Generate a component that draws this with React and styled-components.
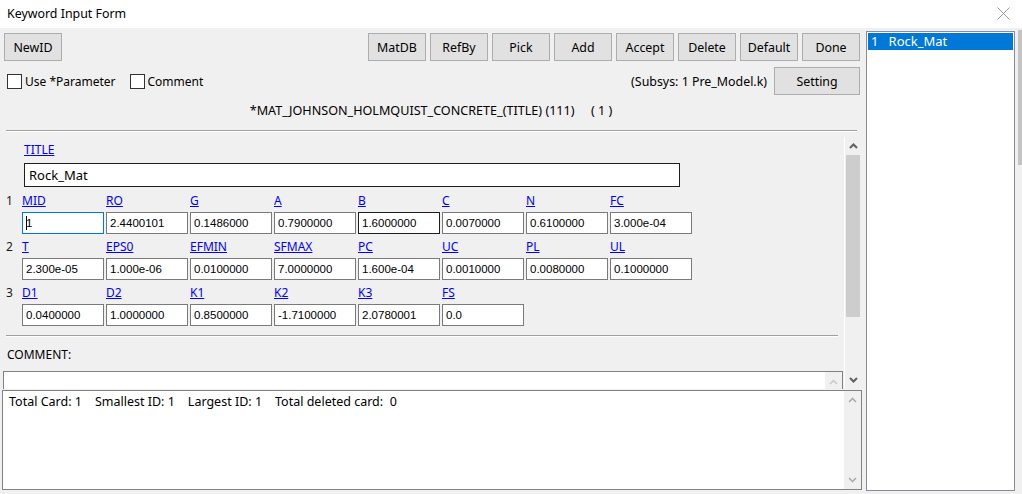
import React from 'react';
import styled, { createGlobalStyle } from 'styled-components';

const GlobalStyle = createGlobalStyle`
  html, body {
    margin: 0;
    padding: 0;
    background: #f0f0f0;
  }
  * {
    box-sizing: border-box;
  }
`;

const Window = styled.div`
  width: 1022px;
  height: 494px;
  display: flex;
  flex-direction: column;
  background: #f0f0f0;
  font-family: 'Noto Sans', 'Liberation Sans', sans-serif;
  font-size: 12px;
  color: #000;
  overflow: hidden;
`;

const TitleBar = styled.div`
  height: 28px;
  flex: none;
  background: #fff;
  display: flex;
  align-items: center;
  justify-content: space-between;
  padding: 0 12px 2px 7px;
  font-size: 12.4px;
`;

const Body = styled.div`
  flex: 1;
  display: flex;
  min-height: 0;
`;

const Main = styled.div`
  width: 864px;
  flex: none;
  display: flex;
  flex-direction: column;
  padding-right: 4px;
`;

const Toolbar = styled.div`
  display: flex;
  align-items: center;
  justify-content: space-between;
  margin-top: 5px;
  padding-left: 4px;
`;

const ButtonGroup = styled.div`
  display: flex;
  gap: 4px;
`;

const Button = styled.button`
  width: ${p => p.$w || 58}px;
  height: 28px;
  background: #e1e1e1;
  border: 1px solid #adadad;
  border-radius: 0;
  font-family: 'Noto Sans', 'Liberation Sans', sans-serif;
  font-size: 12.4px;
  color: #000;
  padding: 0;
  margin: 0;
`;

const OptionRow = styled.div`
  display: flex;
  align-items: center;
  justify-content: space-between;
  margin-top: 6px;
  padding-left: 7px;
  height: 28px;
`;

const CheckGroup = styled.div`
  display: flex;
  align-items: center;
  gap: 14px;
`;

const Check = styled.label`
  display: flex;
  align-items: center;
  gap: 3px;
  &::before {
    content: '';
    width: 13px;
    height: 13px;
    border: 1px solid #333;
    background: #fff;
  }
`;

const Subsys = styled.div`
  display: flex;
  align-items: center;
  gap: 7px;
  font-size: 12.4px;
`;

const Header = styled.div`
  margin-top: 6px;
  height: 20px;
  line-height: 20px;
  text-align: center;
  white-space: pre;
  padding-left: 2px;
  font-size: 12.6px;
`;

const Separator = styled.div`
  margin: ${p => p.$mt || 0}px ${p => p.$mr || 0}px 0 6px;
  height: 2px;
  border-top: 1px solid #a0a0a0;
  border-bottom: 1px solid #fff;
`;

const ScrollArea = styled.div`
  margin-top: 5px;
  height: 252px;
  display: flex;
  overflow: hidden;
`;

const Content = styled.div`
  width: 845px;
  flex: none;
  display: flex;
  flex-direction: column;
  border-right: 1px solid #fff;
`;

const Link = styled.span`
  color: #0000ff;
  text-decoration: underline;
  line-height: 16px;
  height: 16px;
  display: block;
`;

const TitleBlock = styled.div`
  padding: 5px 0 0 24px;
  display: flex;
  flex-direction: column;
  gap: 5px;
`;

const TitleInput = styled.div`
  width: 656px;
  height: 24px;
  border: 1px solid #1e1e1e;
  background: #fff;
  font-size: 13px;
  line-height: 22px;
  padding-left: 4px;
`;

const Card = styled.div`
  display: grid;
  grid-template-columns: 20px repeat(8, 82px);
  grid-template-rows: 16px 22px;
  column-gap: 2px;
  row-gap: 3px;
  margin-top: ${p => p.$mt}px;
`;

const RowNum = styled.span`
  padding-left: 6px;
  line-height: 16px;
  color: #1a1a1a;
`;

const Field = styled.div`
  height: 22px;
  border: 1px solid ${p => (p.$state === 'focus' ? '#0078d7' : p.$state === 'hover' ? '#1e1e1e' : '#7a7a7a')};
  background: #fff;
  font-family: 'Liberation Sans', Arial, sans-serif;
  font-size: 11.5px;
  line-height: 20px;
  padding-left: 3px;
  white-space: pre;
`;

const Caret = styled.span`
  display: inline-block;
  width: 1px;
  height: 14px;
  background: #000;
  vertical-align: -3px;
  margin-right: -1px;
`;

const CommentLabel = styled.div`
  margin: 10px 0 0 7px;
  line-height: 16px;
`;

const CommentInput = styled.div`
  margin: 8px 0 0 3px;
  width: 840px;
  height: 24px;
  flex: none;
  background: #fff;
  border-top: 1px solid #828282;
  border-left: 1px solid #828282;
  border-right: 1px solid #828282;
  display: flex;
  justify-content: flex-end;
`;

const MiniBar = styled.div`
  width: 17px;
  background: #f0f0f0;
  display: flex;
  flex-direction: column;
  align-items: center;
  justify-content: ${p => p.$split ? 'space-between' : 'flex-start'};
  padding: ${p => p.$split ? '6px 0' : '7px 0 0'};
`;

const VScroll = styled.div`
  width: 16px;
  flex: none;
  display: flex;
  flex-direction: column;
  align-items: center;
  background: #f0f0f0;
`;

const ArrowBox = styled.div`
  height: 18px;
  display: flex;
  align-items: center;
  justify-content: center;
`;

const Thumb = styled.div`
  width: 15px;
  height: 162px;
  background: #cdcdcd;
`;

const Track = styled.div`
  flex: 1;
`;

const InfoBox = styled.div`
  margin: 1px 0 0 2px;
  width: 860px;
  height: 100px;
  border: 1px solid #828282;
  background: #fff;
  display: flex;
  justify-content: space-between;
`;

const InfoText = styled.div`
  padding: 3px 0 0 6px;
  white-space: pre;
  line-height: 16px;
  font-size: 12.5px;
`;

const ListPanel = styled.div`
  width: 150px;
  margin: 3px 0 3px 2px;
  border: 1px solid #8b8b9c;
  background: #fff;
  padding: 1px;
`;

const ListItem = styled.div`
  height: 17px;
  line-height: 17px;
  background: ${p => (p.$selected ? '#0078d7' : 'transparent')};
  color: ${p => (p.$selected ? '#fff' : '#000')};
  font-size: 13px;
  padding-left: 3px;
  white-space: pre;
`;

const EdgeStrip = styled.div`
  width: 6px;
  flex: none;
  margin-left: 1px;
  display: flex;
  flex-direction: column;
  padding-top: 2px;
`;

const EdgeThumb = styled.div`
  margin-left: 2px;
  width: 4px;
  height: 135px;
  background: #c4c4c4;
`;

const Chevron = ({ up, color = '#606060', w = 2 }) => (
  <svg width="9" height="6" viewBox="0 0 9 6">
    <path
      d={up ? 'M1 5 L4.5 1.5 L8 5' : 'M1 1 L4.5 4.5 L8 1'}
      fill="none"
      stroke={color}
      strokeWidth={w}
    />
  </svg>
);

const CloseIcon = () => (
  <svg width="13" height="13" viewBox="0 0 13 13">
    <path d="M0.5 0.5 L12.5 12.5 M12.5 0.5 L0.5 12.5" stroke="#9a9a9a" strokeWidth="1" />
  </svg>
);

const cards = [
  {
    n: '1',
    fields: [
      ['MID', '1', 'focus'],
      ['RO', '2.4400101'],
      ['G', '0.1486000'],
      ['A', '0.7900000'],
      ['B', '1.6000000', 'hover'],
      ['C', '0.0070000'],
      ['N', '0.6100000'],
      ['FC', '3.000e-04'],
    ],
  },
  {
    n: '2',
    fields: [
      ['T', '2.300e-05'],
      ['EPS0', '1.000e-06'],
      ['EFMIN', '0.0100000'],
      ['SFMAX', '7.0000000'],
      ['PC', '1.600e-04'],
      ['UC', '0.0010000'],
      ['PL', '0.0080000'],
      ['UL', '0.1000000'],
    ],
  },
  {
    n: '3',
    fields: [
      ['D1', '0.0400000'],
      ['D2', '1.0000000'],
      ['K1', '0.8500000'],
      ['K2', '-1.7100000'],
      ['K3', '2.0780001'],
      ['FS', '0.0'],
    ],
  },
];

const CardRow = ({ card, mt }) => (
  <Card $mt={mt}>
    <RowNum>{card.n}</RowNum>
    {Array.from({ length: 8 }).map((_, i) => (
      <span key={'l' + i}>{card.fields[i] && <Link>{card.fields[i][0]}</Link>}</span>
    ))}
    <span />
    {Array.from({ length: 8 }).map((_, i) => {
      const f = card.fields[i];
      if (!f) return <span key={'f' + i} />;
      return (
        <Field key={'f' + i} $state={f[2]}>
          {f[2] === 'focus' && <Caret />}
          {f[1]}
        </Field>
      );
    })}
  </Card>
);

export default function App() {
  return (
    <Window>
      <GlobalStyle />
      <TitleBar>
        <span>Keyword Input Form</span>
        <CloseIcon />
      </TitleBar>
      <Body>
        <Main>
          <Toolbar>
            <Button>NewID</Button>
            <ButtonGroup>
              {['MatDB', 'RefBy', 'Pick', 'Add', 'Accept', 'Delete', 'Default', 'Done'].map(b => (
                <Button key={b}>{b}</Button>
              ))}
            </ButtonGroup>
          </Toolbar>
          <OptionRow>
            <CheckGroup>
              <Check>Use *Parameter</Check>
              <Check>Comment</Check>
            </CheckGroup>
            <Subsys>
              <span>(Subsys: 1 Pre_Model.k)</span>
              <Button $w={86}>Setting</Button>
            </Subsys>
          </OptionRow>
          <Header>{'*MAT_JOHNSON_HOLMQUIST_CONCRETE_(TITLE) (111)     ( 1 )'}</Header>
          <Separator $mt={9} $mr={3} />
          <ScrollArea>
            <Content>
              <TitleBlock>
                <Link>TITLE</Link>
                <TitleInput>Rock_Mat</TitleInput>
              </TitleBlock>
              <CardRow card={cards[0]} mt={6} />
              <CardRow card={cards[1]} mt={5} />
              <CardRow card={cards[2]} mt={5} />
              <Separator $mt={9} $mr={6} />
              <CommentLabel>COMMENT:</CommentLabel>
              <CommentInput>
                <MiniBar>
                  <Chevron up color="#c8c8c8" w={1.5} />
                </MiniBar>
              </CommentInput>
            </Content>
            <VScroll>
              <ArrowBox>
                <Chevron up />
              </ArrowBox>
              <Thumb />
              <Track />
              <ArrowBox>
                <Chevron />
              </ArrowBox>
            </VScroll>
          </ScrollArea>
          <InfoBox>
            <InfoText>{'Total Card: 1    Smallest ID: 1    Largest ID: 1    Total deleted card:  0'}</InfoText>
            <MiniBar $split>
              <Chevron up color="#a8a8a8" w={1.5} />
              <Chevron color="#a8a8a8" w={1.5} />
            </MiniBar>
          </InfoBox>
        </Main>
        <ListPanel>
          <ListItem $selected>{'1   Rock_Mat'}</ListItem>
        </ListPanel>
        <EdgeStrip>
          <EdgeThumb />
        </EdgeStrip>
      </Body>
    </Window>
  );
}
